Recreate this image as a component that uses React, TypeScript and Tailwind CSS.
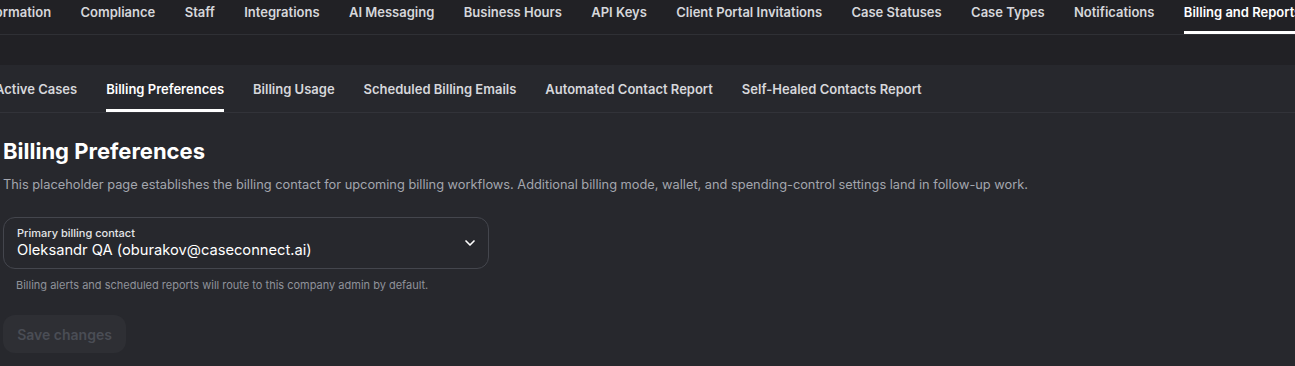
import { ChevronDown } from 'lucide-react';

const topTabs = [
  'Company Information',
  'Compliance',
  'Staff',
  'Integrations',
  'AI Messaging',
  'Business Hours',
  'API Keys',
  'Client Portal Invitations',
  'Case Statuses',
  'Case Types',
  'Notifications',
  'Billing and Reports',
];

const subTabs = [
  'Active Cases',
  'Billing Preferences',
  'Billing Usage',
  'Scheduled Billing Emails',
  'Automated Contact Report',
  'Self-Healed Contacts Report',
];

export default function App() {
  return (
    <div
      className="h-[366px] w-[1295px] overflow-hidden bg-[#212125] text-white"
      style={{ fontFamily: 'Inter, "Noto Sans", sans-serif' }}
    >
      {/* settings tabs, scrolled so the first item is cut off */}
      <nav className="border-b border-[#2f3035]">
        <ul className="-ml-[85px] flex h-[34px] gap-[29.4px] whitespace-nowrap">
          {topTabs.map((tab) => {
            const active = tab === 'Billing and Reports';
            return (
              <li
                key={tab}
                className={`flex h-full items-center border-b-[3px] pb-[5px] text-[13px] font-semibold ${
                  active ? 'border-white text-white' : 'border-transparent text-[#d6d7db]'
                }`}
              >
                {tab}
              </li>
            );
          })}
        </ul>
      </nav>

      <div className="h-[30px]" />

      <main className="h-full bg-[#27282d]">
        <nav className="border-b border-[#323339]">
          <ul className="-ml-[5px] flex h-[47px] gap-[29px] whitespace-nowrap">
            {subTabs.map((tab) => {
              const active = tab === 'Billing Preferences';
              return (
                <li
                  key={tab}
                  className={`flex h-full items-center border-b-[3px] pt-[6px] text-[13px] font-semibold ${
                    active ? 'border-white text-white' : 'border-transparent text-[#d6d7db]'
                  }`}
                >
                  {tab}
                </li>
              );
            })}
          </ul>
        </nav>

        <section className="pl-[3px] pt-[24px]">
          <h1 className="text-[22px] font-bold leading-[28px] text-white">Billing Preferences</h1>
          <p className="mt-[11px] text-[12.8px] leading-[18px] text-[#a3a6ae]">
            This placeholder page establishes the billing contact for upcoming billing workflows. Additional billing
            mode, wallet, and spending-control settings land in follow-up work.
          </p>

          <div className="mt-[23px] flex h-[52px] w-[486px] items-center justify-between rounded-[12px] border border-[#44464d] pl-[13px] pr-[10px]">
            <div className="flex flex-col">
              <span className="text-[11px] font-medium leading-[14px] text-[#e4e5e8]">Primary billing contact</span>
              <span className="text-[14.7px] leading-[21px] text-white">Oleksandr QA (oburakov@caseconnect.ai)</span>
            </div>
            <ChevronDown className="h-4 w-4 text-white" strokeWidth={2.5} />
          </div>
          <p className="mt-[9px] pl-[13px] text-[11px] leading-[15px] text-[#8f929a]">
            Billing alerts and scheduled reports will route to this company admin by default.
          </p>

          <button
            type="button"
            disabled
            className="mt-[22px] h-[38px] w-[123px] rounded-[12px] bg-[#2e2f34] text-[14px] font-semibold text-[#4a4d55]"
          >
            Save changes
          </button>
        </section>
      </main>
    </div>
  );
}
